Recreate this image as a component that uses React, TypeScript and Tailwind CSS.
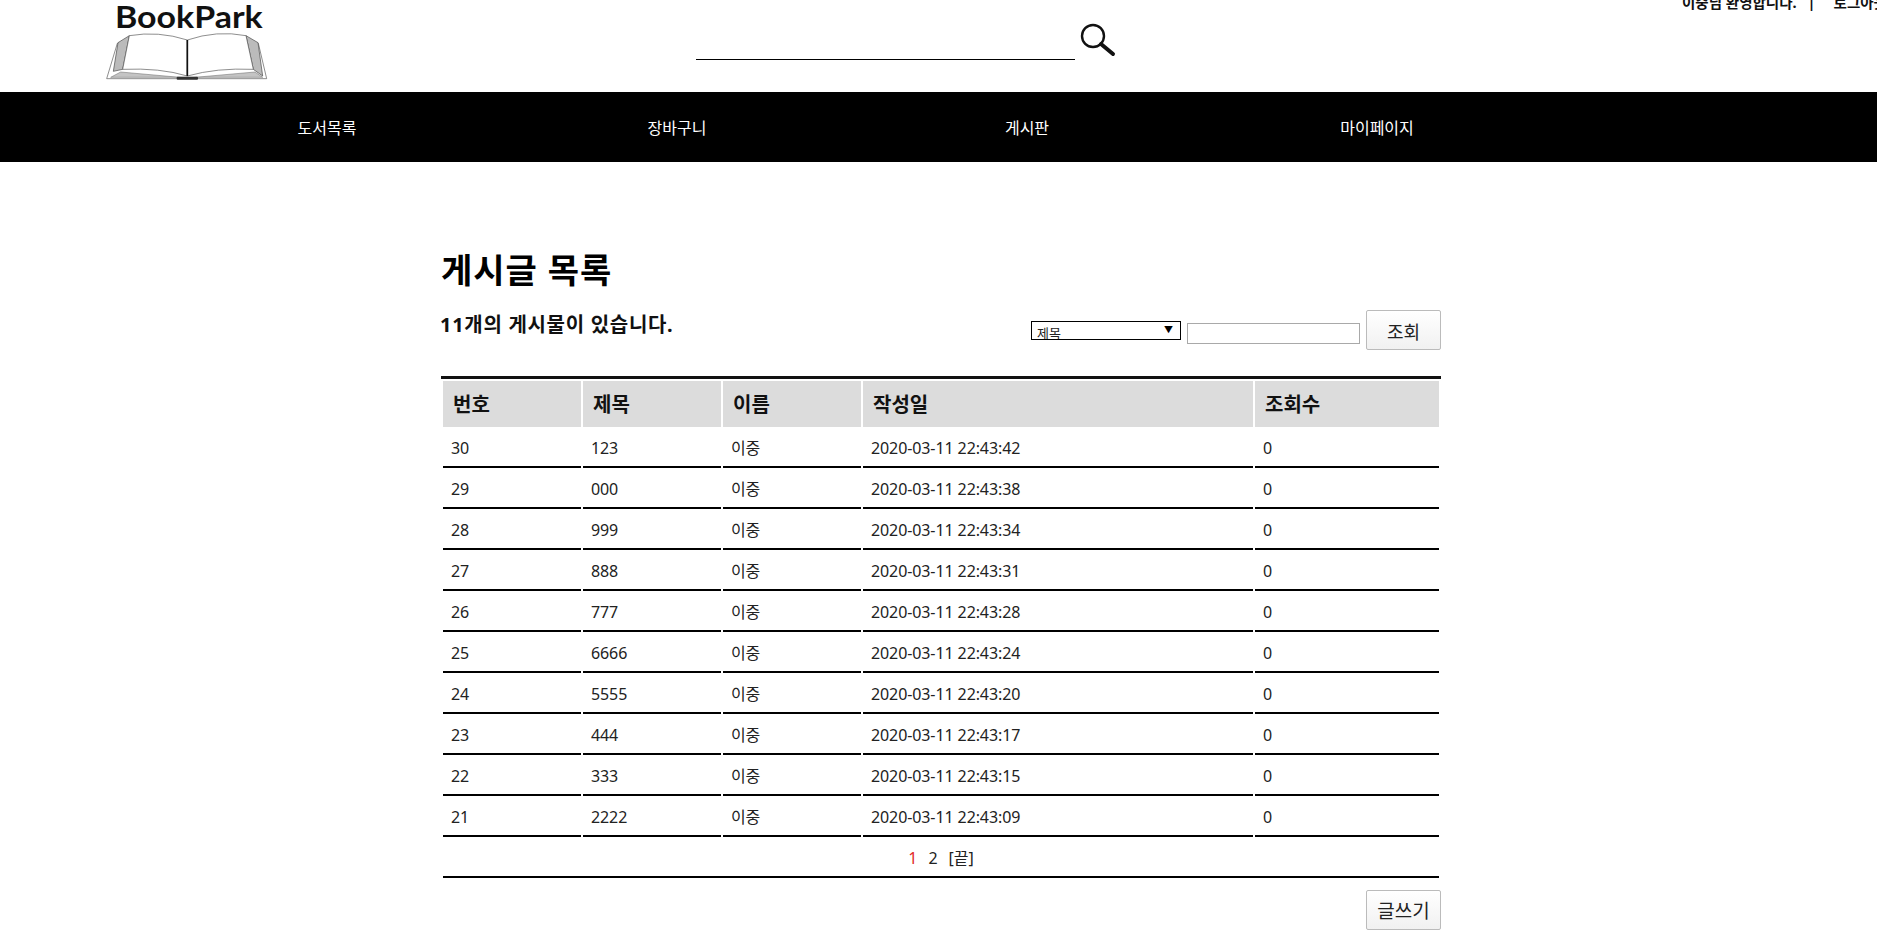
const rows = [
  { no: 30, title: '123', date: '2020-03-11 22:43:42' },
  { no: 29, title: '000', date: '2020-03-11 22:43:38' },
  { no: 28, title: '999', date: '2020-03-11 22:43:34' },
  { no: 27, title: '888', date: '2020-03-11 22:43:31' },
  { no: 26, title: '777', date: '2020-03-11 22:43:28' },
  { no: 25, title: '6666', date: '2020-03-11 22:43:24' },
  { no: 24, title: '5555', date: '2020-03-11 22:43:20' },
  { no: 23, title: '444', date: '2020-03-11 22:43:17' },
  { no: 22, title: '333', date: '2020-03-11 22:43:15' },
  { no: 21, title: '2222', date: '2020-03-11 22:43:09' },
];

const columns = [
  { label: '번호', width: 'w-[138px]' },
  { label: '제목', width: 'w-[138px]' },
  { label: '이름', width: 'w-[138px]' },
  { label: '작성일', width: 'w-[390px]' },
  { label: '조회수', width: 'w-[184px]' },
];

const menu = ['도서목록', '장바구니', '게시판', '마이페이지'];

function Logo() {
  return (
    <svg width="220" height="90" viewBox="0 0 660 270" className="shrink-0">
      <text
        x="105"
        y="84"
        textLength="443"
        lengthAdjust="spacingAndGlyphs"
        fontFamily="Lato, sans-serif"
        fontWeight="700"
        fontSize="92"
        fill="#111"
      >
        BookPark
      </text>
      <path d="M112 130 L80 236 L560 236 L535 130 Z" fill="#fff" stroke="#555" strokeWidth="2" />
      <path d="M122 216 L322 234 L525 216 L548 232 L92 232 Z" fill="#c4c4c4" stroke="#666" strokeWidth="1.5" />
      <path d="M148 107 L114 128 L100 214 L128 208 Z" fill="#bbb" stroke="#444" strokeWidth="2" />
      <path d="M498 107 L534 128 L548 228 L520 208 Z" fill="#bbb" stroke="#444" strokeWidth="2" />
      <path d="M148 107 Q235 92 322 120 L322 228 Q240 203 128 208 Z" fill="#fff" stroke="#555" strokeWidth="2" />
      <path d="M322 120 Q410 90 498 107 L520 208 Q410 203 322 228 Z" fill="#fff" stroke="#555" strokeWidth="2" />
      <path d="M322 120 L322 228" stroke="#111" strokeWidth="5" />
      <rect x="290" y="230" width="64" height="9" rx="3" fill="#333" />
    </svg>
  );
}

function SearchGlyph() {
  return (
    <svg width="38" height="34" viewBox="0 0 38 34" className="shrink-0 mt-[23px] ml-[3px]">
      <circle cx="15" cy="13" r="11" fill="none" stroke="#111" strokeWidth="2.4" />
      <path d="M23 21 L35 31" stroke="#111" strokeWidth="4" strokeLinecap="round" />
    </svg>
  );
}

export default function App() {
  return (
    <div className="h-[931px] w-[1877px] overflow-hidden bg-white font-['Noto_Sans','Noto_Sans_CJK_KR',sans-serif] text-[#222]">
      <header className="flex h-[92px] items-start overflow-hidden">
        <div className="ml-[80px] h-[90px]">
          <Logo />
        </div>
        <div className="ml-[396px] flex shrink-0">
          <div className="mt-[59px] h-px w-[379px] bg-black" />
          <SearchGlyph />
        </div>
        <div className="ml-[566px] -mt-[9px] flex shrink-0 whitespace-nowrap text-[14.5px] leading-[22px] font-bold text-[#111]">
          <span>이중님 환영합니다.</span>
          <span className="ml-[11px] mr-[18px]">|</span>
          <span>로그아웃</span>
        </div>
      </header>

      <nav className="flex h-[70px] items-center bg-black pl-[152px] pt-[2px] text-white">
        {menu.map((item) => (
          <a key={item} className="w-[350px] text-center text-[16px]">
            {item}
          </a>
        ))}
      </nav>

      <main className="ml-[441px] w-[1000px]">
        <h1 className="mt-[84px] h-[48px] text-[34px] leading-[48px] font-bold tracking-[1px] text-black">
          게시글 목록
        </h1>
        <div className="mt-[16px] flex h-[40px] items-start">
          <h3 className="-ml-px pt-px text-[20px] leading-[28px] font-bold tracking-[0.7px] text-[#111]">
            11개의 게시물이 있습니다.
          </h3>
          <div className="ml-auto flex items-start">
            <div className="mt-[11px] flex h-[19px] w-[150px] justify-between overflow-hidden border border-black pl-[5px] pr-[7px] text-[13px] leading-[20px]">
              <span className="mt-[1px]">제목</span>
              <span className="text-[9px] leading-[16px] text-black">▼</span>
            </div>
            <input className="mt-[13px] ml-[6px] h-[21px] w-[173px] border border-[#a9a9a9] bg-white" />
            <button className="ml-[6px] h-[40px] w-[75px] rounded-[2px] border border-[#bbb] bg-gradient-to-b from-white to-[#f1f1f1] pt-[4px] text-[18px] text-[#222]">
              조회
            </button>
          </div>
        </div>

        <table className="mt-[26px] w-[1000px] table-fixed border-separate border-spacing-[2px] border-t-[3px] border-[#111]">
          <thead>
            <tr>
              {columns.map((col) => (
                <th
                  key={col.label}
                  className={`${col.width} h-[46px] bg-[#dcdcdc] pl-[10px] pt-[2px] text-left text-[20px] font-bold text-[#111]`}
                >
                  {col.label}
                </th>
              ))}
            </tr>
          </thead>
          <tbody>
            {rows.map((row) => (
              <tr key={row.no} className="text-[16px] tracking-[-0.1px]">
                <td className="h-[39px] border-b-2 border-black pl-[8px]">{row.no}</td>
                <td className="h-[39px] border-b-2 border-black pl-[8px]">{row.title}</td>
                <td className="h-[39px] border-b-2 border-black pl-[8px]">이중</td>
                <td className="h-[39px] border-b-2 border-black pl-[8px]">{row.date}</td>
                <td className="h-[39px] border-b-2 border-black pl-[8px]">0</td>
              </tr>
            ))}
            <tr>
              <td colSpan={5} className="h-[39px] border-b-2 border-black text-center text-[16px]">
                <span className="text-[#e22b2b]">1</span>
                <span className="ml-[11px]">2</span>
                <span className="ml-[11px]">[끝]</span>
              </td>
            </tr>
          </tbody>
        </table>

        <div className="mt-[10px] flex justify-end">
          <button className="h-[40px] w-[75px] rounded-[2px] border border-[#bbb] bg-gradient-to-b from-white to-[#f1f1f1] pt-[3px] text-[19px] text-[#222]">
            글쓰기
          </button>
        </div>
      </main>
    </div>
  );
}
